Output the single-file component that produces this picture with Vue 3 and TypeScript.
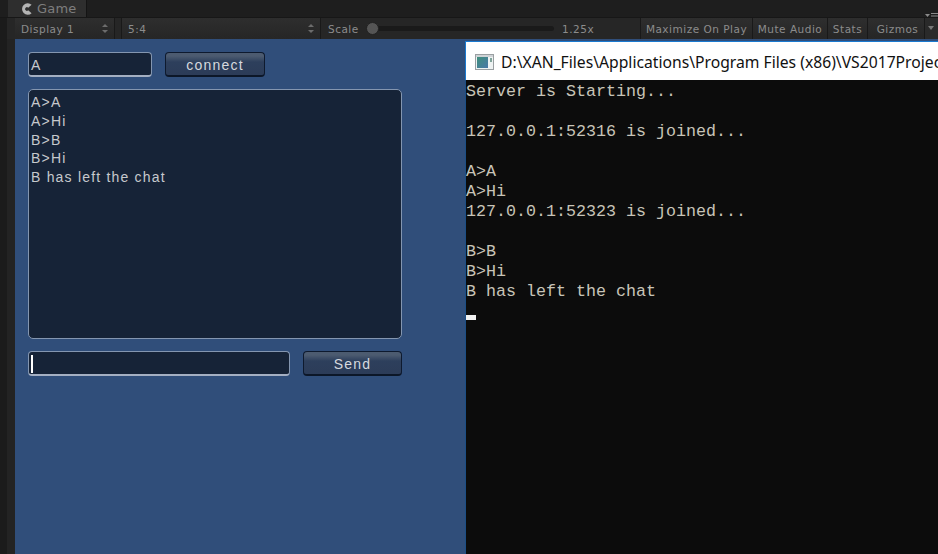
<script setup lang="ts">
const chatLines: string[] = ['A>A', 'A>Hi', 'B>B', 'B>Hi', 'B has left the chat']
const consoleLines: string[] = [
  'Server is Starting...',
  '',
  '127.0.0.1:52316 is joined...',
  '',
  'A>A',
  'A>Hi',
  '127.0.0.1:52323 is joined...',
  '',
  'B>B',
  'B>Hi',
  'B has left the chat',
]
</script>

<template>
  <div class="root">
    <header class="tabbar">
      <div class="tab">
        <svg class="tab-icon" width="12" height="12" viewBox="0 0 12 12">
          <path d="M10.600 1.800 A5.700 5.700 0 1 0 10.600 10.200 L7.200 7.300 A1.800 1.800 0 1 1 7.200 4.700 Z" fill="#b4b4b4" />
        </svg>
        <span>Game</span>
      </div>
      <div class="tab-menu">
        <svg width="13" height="8" viewBox="0 0 13 8">
          <path d="M0 2h5L2.500 5z" fill="#8a8a8a" />
          <path d="M6 1h7v1H6zM6 3.500h7v1H6zM6 6h7v1H6z" fill="#8a8a8a" />
        </svg>
      </div>
    </header>

    <div class="toolbar">
      <div class="tool drop display"><span>Display 1</span><i class="updown"></i></div>
      <div class="tool drop aspect"><span>5:4</span><i class="updown"></i></div>
      <div class="scale">
        <span class="scale-label">Scale</span>
        <div class="slider"><b class="thumb"></b></div>
        <span class="scale-value">1.25x</span>
      </div>
      <div class="tool btn maximize">Maximize On Play</div>
      <div class="tool btn mute">Mute Audio</div>
      <div class="tool btn stats">Stats</div>
      <div class="tool btn gizmos">Gizmos</div>
      <div class="gizmo-arrow"></div>
    </div>

    <main class="main">
      <div class="gutter"></div>
      <section class="game">
        <div class="row">
          <div class="field name">A</div>
          <button class="ubtn connect">connect</button>
        </div>
        <div class="log">
          <div v-for="(l, i) in chatLines" :key="i" class="log-line">{{ l }}</div>
        </div>
        <div class="row">
          <div class="field message"><i class="caret"></i></div>
          <button class="ubtn send">Send</button>
        </div>
      </section>
      <section class="console">
        <div class="titlebar">
          <svg class="con-icon" width="19" height="16" viewBox="0 0 19 16">
            <rect x="0.500" y="0.500" width="18" height="15" fill="#eef2f2" stroke="#9a9fa2" />
            <rect x="1" y="1" width="17" height="2" fill="#cfd3d6" />
            <defs>
              <linearGradient id="cg" x1="0" y1="0" x2="1" y2="1">
                <stop offset="0" stop-color="#3f8f7c" />
                <stop offset="1" stop-color="#4a78a8" />
              </linearGradient>
            </defs>
            <rect x="2" y="3" width="11" height="11" fill="url(#cg)" />
            <rect x="15" y="4" width="2" height="4" fill="#7fa39a" />
          </svg>
          <span class="con-title">D:\XAN_Files\Applications\Program Files (x86)\VS2017Projec</span>
        </div>
        <div class="con-body">
          <div v-for="(l, i) in consoleLines" :key="i" class="con-line">{{ l || '&nbsp;' }}</div>
          <div class="con-cursor"></div>
        </div>
      </section>
    </main>
  </div>
</template>

<style>
html, body { margin: 0; background: #1c1c1c; overflow: hidden; }
</style>

<style scoped>
.root {
  width: 938px;
  height: 554px;
  display: flex;
  flex-direction: column;
  overflow: hidden;
  background: #1c1c1c;
  font-family: "DejaVu Sans", sans-serif;
}
.tabbar {
  height: 17px;
  display: flex;
  justify-content: space-between;
  background: #1e1e1e;
}
.tab {
  margin-left: 8px;
  width: 79px;
  height: 17px;
  background: #2e2e2e;
  border-right: 1px solid #141414;
  box-sizing: border-box;
  display: flex;
  align-items: center;
  color: #7e7e7e;
  font-size: 13px;
  letter-spacing: 0.2px;
}
.tab-icon { margin: 0 4px 0 13px; }
.tab-menu { padding: 5px 0 0; }
.toolbar {
  height: 22px;
  padding-left: 15px;
  display: flex;
  background: linear-gradient(90deg, #1b1b1b 0 7px, #262626 7px);
  border-top: 1px solid #171717;
  box-sizing: border-box;
  color: #8c8c8c;
  font-size: 10.5px;
  letter-spacing: 0.5px;
}
.tool {
  display: flex;
  align-items: center;
  box-sizing: border-box;
  background: linear-gradient(#2e2e2e, #262626);
  border-right: 1px solid #191919;
  white-space: nowrap;
}
.drop { justify-content: space-between; padding: 0 6px; }
.display { width: 100px; }
.aspect { width: 200px; margin-left: 6px; border-left: 1px solid #191919; }
.updown {
  position: relative;
  width: 6px;
  height: 9px;
  flex: none;
}
.updown::before, .updown::after {
  content: "";
  position: absolute;
  left: 0;
  border-left: 3px solid transparent;
  border-right: 3px solid transparent;
}
.updown::before { top: 0; border-bottom: 3px solid #6c6c6c; }
.updown::after { bottom: 0; border-top: 3px solid #6c6c6c; }
.scale {
  width: 319px;
  display: flex;
  align-items: center;
  padding-left: 7px;
  box-sizing: border-box;
}
.scale-label { width: 38px; }
.slider {
  width: 188px;
  height: 5px;
  border-radius: 3px;
  background: #1a1a1a;
  position: relative;
}
.thumb {
  position: absolute;
  left: 0;
  top: -4px;
  width: 13px;
  height: 13px;
  border-radius: 50%;
  background: #555;
  border: 1px solid #222;
  box-sizing: border-box;
}
.scale-value { margin-left: 8px; }
.btn { justify-content: center; }
.maximize { width: 113px; border-left: 1px solid #191919; }
.mute { width: 75px; }
.stats { width: 40px; }
.gizmos { width: 57px; padding-left: 3px; }
.gizmo-arrow {
  flex: 1;
  position: relative;
  background: #2a2a2a;
}
.gizmo-arrow::after {
  content: "";
  position: absolute;
  left: 3px;
  top: 8px;
  border-left: 3px solid transparent;
  border-right: 3px solid transparent;
  border-top: 4px solid #777;
}
.main { flex: 1; min-height: 0; display: flex; }
.gutter {
  width: 15px;
  flex: none;
  background: linear-gradient(90deg, #1b1b1b 0 7px, #232323 7px);
}
.game {
  width: 450px;
  flex: none;
  box-sizing: border-box;
  background: #304e7a;
  padding: 13px 63px 0 13px;
  display: flex;
  flex-direction: column;
  gap: 12px;
  font-family: "Liberation Sans", Arial, sans-serif;
  color: #c6c9cd;
  font-size: 14px;
  letter-spacing: 1.2px;
}
.row { display: flex; justify-content: space-between; height: 25px; }
.row:first-child { justify-content: flex-start; gap: 13px; }
.field {
  box-sizing: border-box;
  background: #162337;
  border: 1px solid #8496b0;
  border-bottom: 2px solid #a4afc2;
  border-radius: 4px;
  padding: 1px 2px 0;
  display: flex;
  align-items: center;
}
.name { width: 124px; }
.message { width: 262px; }
.caret { width: 2px; height: 18px; background: #fff; }
.ubtn {
  box-sizing: border-box;
  height: 25px;
  padding: 1px 0 0;
  border: 1px solid #0e1a2e;
  border-bottom: 2px solid #0c1728;
  border-radius: 4px;
  background: linear-gradient(#4c5b70 0, #4c5b70 3px, #2d3f5c 9px, #2c3c58 100%);
  color: #d6d9de;
  font: 14px "Liberation Sans", Arial, sans-serif;
  letter-spacing: 1.2px;
}
.connect { width: 100px; }
.send { width: 99px; }
.log {
  height: 250px;
  box-sizing: border-box;
  background: #162337;
  border: 1px solid #8496b0;
  border-radius: 5px;
  padding: 3px 2px;
}
.log-line { line-height: 18.75px; white-space: nowrap; }
.console {
  flex: 1;
  min-width: 0;
  display: flex;
  flex-direction: column;
  background: #304e7a;
}
.titlebar {
  margin-top: 2px;
  height: 39px;
  flex: none;
  box-sizing: border-box;
  padding-top: 2px;
  background: #fff;
  border-top: 1px solid #1a7ad0;
  border-left: 1px solid #1a7ad0;
  display: flex;
  align-items: center;
  overflow: hidden;
}
.con-icon { margin-left: 9px; flex: none; }
.con-title {
  margin-left: 7px;
  font: 15.7px "Noto Sans", "Open Sans", sans-serif;
  color: #111;
  white-space: nowrap;
}
.con-body {
  flex: 1;
  box-sizing: border-box;
  background: #0c0c0c;
  border-left: 1px solid #1c4f86;
  padding-top: 2px;
  font: 16.67px/20px "Liberation Mono", monospace;
  color: #c8c4b8;
}
.con-line { height: 20px; white-space: pre; }
.con-cursor { width: 10px; height: 5px; margin-top: 13px; background: #f2f2f2; }
</style>
